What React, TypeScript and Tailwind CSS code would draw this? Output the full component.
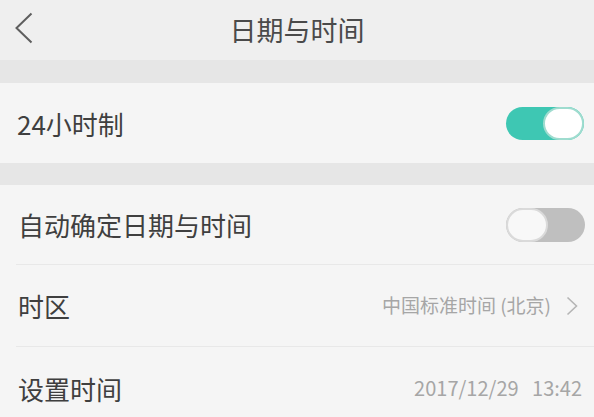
import React from "react";

const font = { fontFamily: '"Noto Sans CJK SC", "Noto Sans", sans-serif' };

function Toggle({ on }: { on: boolean }) {
  if (on) {
    return (
      <div className="relative w-[78px] h-[33px] rounded-full bg-[#3ec7b3]">
        <div className="absolute right-0 top-0 w-[41px] h-[33px] rounded-full bg-white border-2 border-[#9fdccf]" />
      </div>
    );
  }
  return (
    <div className="relative w-[79px] h-[34px] rounded-full bg-[#bfbfbf]">
      <div className="absolute left-0 top-0 w-[42px] h-[34px] rounded-full bg-[#f8f8f8] border-2 border-[#dadada]" />
    </div>
  );
}

function Chevron() {
  return (
    <svg width="12" height="20" viewBox="0 0 12 20" fill="none">
      <path d="M1.5 1.5 L10.5 10 L1.5 18.5" stroke="#b5b5b5" strokeWidth="1.6" />
    </svg>
  );
}

export default function App() {
  return (
    <div className="w-[594px] h-[417px] overflow-hidden bg-[#f5f5f5] text-[#3f3f3f]" style={font}>
      <div className="relative h-[60px] bg-[#efefef] flex items-center justify-center">
        <svg className="absolute left-[14px] top-[12px]" width="20" height="32" viewBox="0 0 20 32" fill="none">
          <path d="M17.5 1.5 L2.5 16 L17.5 30.5" stroke="#5e5e5e" strokeWidth="2" />
        </svg>
        <span className="text-[27px] text-[#4a4a4a]">日期与时间</span>
      </div>
      <div className="h-[23px] bg-[#e6e6e6]" />
      <div className="h-[80px] flex items-center justify-between pl-[17px] pr-[10px]">
        <span className="text-[26px]">24小时制</span>
        <Toggle on />
      </div>
      <div className="h-[22px] bg-[#e6e6e6]" />
      <div className="pl-[16px]">
        <div className="h-[80px] flex items-center justify-between pr-[9px] border-b border-[#e8e8e8]">
          <span className="text-[26px] pl-[2px]">自动确定日期与时间</span>
          <Toggle on={false} />
        </div>
        <div className="h-[82px] flex items-center justify-between pr-[16px] border-b border-[#e8e8e8]">
          <span className="text-[26px] pl-[2px]">时区</span>
          <div className="flex items-center gap-[15px]">
            <span className="text-[19px] text-[#a6a6a6]">中国标准时间 (北京)</span>
            <Chevron />
          </div>
        </div>
        <div className="h-[82px] flex items-center justify-between pr-[12px]">
          <span className="text-[26px] pl-[2px]">设置时间</span>
          <span className="text-[20px] text-[#a6a6a6] whitespace-pre">2017/12/29   13:42</span>
        </div>
      </div>
    </div>
  );
}
